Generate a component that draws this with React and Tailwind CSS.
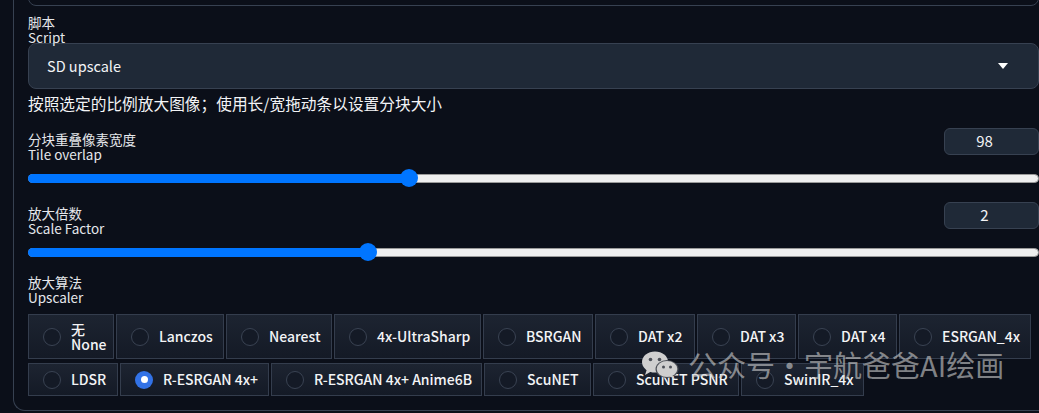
import React from 'react';

const FONT = { fontFamily: '"Noto Sans CJK SC", "Noto Sans", sans-serif' };

const ROW_ONE = [
  { id: 'none', zh: '无', en: 'None', w: 'w-[86px]' },
  { id: 'lanczos', en: 'Lanczos', w: 'w-[108px]' },
  { id: 'nearest', en: 'Nearest', w: 'w-[106px]' },
  { id: 'ultrasharp', en: '4x-UltraSharp', w: 'w-[147px]' },
  { id: 'bsrgan', en: 'BSRGAN', w: 'w-[110px]' },
  { id: 'dat2', en: 'DAT x2', w: 'w-[100px]' },
  { id: 'dat3', en: 'DAT x3', w: 'w-[99px]' },
  { id: 'dat4', en: 'DAT x4', w: 'w-[99px]' },
  { id: 'esrgan', en: 'ESRGAN_4x', w: 'w-[132px]' },
];

const ROW_TWO = [
  { id: 'ldsr', en: 'LDSR', w: 'w-[90px]' },
  { id: 'resrgan', en: 'R-ESRGAN 4x+', w: 'w-[149px]' },
  { id: 'anime', en: 'R-ESRGAN 4x+ Anime6B', w: 'w-[211px]' },
  { id: 'scunet', en: 'ScuNET', w: 'w-[107px]' },
  { id: 'scunetpsnr', en: 'ScuNET PSNR', w: 'w-[146px]' },
  { id: 'swinir', en: 'SwinIR_4x', w: 'w-[123px]' },
];

function FieldLabel({ zh, en }) {
  return (
    <div className="text-[13.5px] leading-[15px] text-gray-200">
      <div>{zh}</div>
      <div>{en}</div>
    </div>
  );
}

function Slider({ zh, en, value, pct }) {
  return (
    <div>
      <div className="flex items-start justify-between">
        <div className="pt-[4px]">
          <FieldLabel zh={zh} en={en} />
        </div>
        <div className="flex h-[27px] w-[95px] items-center justify-center rounded-md border border-[#374151] bg-[#1f2937] pr-[14px] text-[15px] text-gray-100">
          {value}
        </div>
      </div>
      <div className="relative mt-[7px] flex h-[18px] items-center">
        <div className="h-[9px] w-full rounded-full border border-[#9a9a9a] bg-[#efefef]" />
        <div className="absolute left-0 top-[4.5px] h-[9px] rounded-l-full bg-[#0075ff]" style={{ width: `${pct}%` }} />
        <div className="absolute top-0 h-[18px] w-[18px] -translate-x-1/2 rounded-full bg-[#0075ff]" style={{ left: `${pct}%` }} />
      </div>
    </div>
  );
}

function RadioItem({ item, checked }) {
  return (
    <label className={`flex shrink-0 items-center gap-[10px] whitespace-nowrap border border-[#343d4d] bg-gradient-to-b from-[#1d2431] to-[#141a26] pl-[14px] text-[14px] font-medium text-gray-100 ${item.w}`}>
      {checked ? (
        <span className="flex h-[18px] w-[18px] shrink-0 items-center justify-center rounded-full bg-[#3272e6]">
          <span className="h-[7px] w-[7px] rounded-full bg-white" />
        </span>
      ) : (
        <span className="h-[18px] w-[18px] shrink-0 rounded-full border border-[#3a4353] bg-[#141a26]" />
      )}
      {item.zh ? (
        <span className="flex flex-col leading-[15px]">
          <span>{item.zh}</span>
          <span>{item.en}</span>
        </span>
      ) : (
        <span>{item.en}</span>
      )}
    </label>
  );
}

function WeChatLogo() {
  return (
    <svg width="38" height="28" viewBox="0 0 38 28">
      <ellipse cx="14" cy="11" rx="13" ry="10.5" fill="#cfcfcf" />
      <path d="M6 18 L4 24 L11 20 Z" fill="#cfcfcf" />
      <circle cx="9.5" cy="8.5" r="1.8" fill="#4b4f57" />
      <circle cx="18.5" cy="8.5" r="1.8" fill="#4b4f57" />
      <ellipse cx="26" cy="18" rx="11.5" ry="9" fill="#4b4f57" />
      <ellipse cx="26" cy="18" rx="10.3" ry="8" fill="#cfcfcf" />
      <path d="M31 24 L34 28 L28 25 Z" fill="#cfcfcf" />
      <circle cx="22.5" cy="16" r="1.5" fill="#4b4f57" />
      <circle cx="29.5" cy="16" r="1.5" fill="#4b4f57" />
    </svg>
  );
}

export default function App() {
  return (
    <div className="relative h-[413px] w-[1039px] overflow-hidden bg-[#0b0f19]" style={FONT}>
      <div className="ml-[13px] w-[1040px] rounded-bl-xl border-b border-l border-[#374151] px-[14px] pb-[14px]">
        <div className="-mt-[35px] h-[41px] rounded-lg border border-[#374151] bg-[#0b0f19]" />

        <div className="mt-[9px]">
          <FieldLabel zh="脚本" en="Script" />
        </div>
        <div className="-mt-[2px] flex h-[46px] w-[1011px] items-center justify-between rounded-lg border border-[#374151] bg-[#1f2937] pl-[18px] pr-[30px] text-[14.5px] text-gray-100">
          <span>SD upscale</span>
          <svg width="10" height="6" viewBox="0 0 10 6">
            <path d="M0 0 L10 0 L5 6 Z" fill="#ffffff" />
          </svg>
        </div>
        <p className="mt-[4px] text-[15.7px] leading-[22px] text-gray-100">
          按照选定的比例放大图像；使用长/宽拖动条以设置分块大小
        </p>

        <div className="mt-[13px] w-[1011px]">
          <Slider zh="分块重叠像素宽度" en="Tile overlap" value="98" pct={37.7} />
        </div>
        <div className="mt-[15px] w-[1011px]">
          <Slider zh="放大倍数" en="Scale Factor" value="2" pct={33.6} />
        </div>

        <div className="mt-[14px]">
          <FieldLabel zh="放大算法" en="Upscaler" />
        </div>
        <div className="mt-[9px] flex flex-col gap-[4px]">
          <div className="flex h-[45px] gap-[2px]">
            {ROW_ONE.map(item => (
              <RadioItem key={item.id} item={item} checked={false} />
            ))}
          </div>
          <div className="flex h-[33px] gap-[2px]">
            {ROW_TWO.map(item => (
              <RadioItem key={item.id} item={item} checked={item.id === 'resrgan'} />
            ))}
          </div>
        </div>
      </div>

      {/* watermark */}
      <div className="absolute left-[641px] top-[350px] flex items-center gap-[9px] text-[29px] leading-none text-[#d0d0d0]/60">
        <WeChatLogo />
        <span>公众号・宇航爸爸AI绘画</span>
      </div>
    </div>
  );
}
